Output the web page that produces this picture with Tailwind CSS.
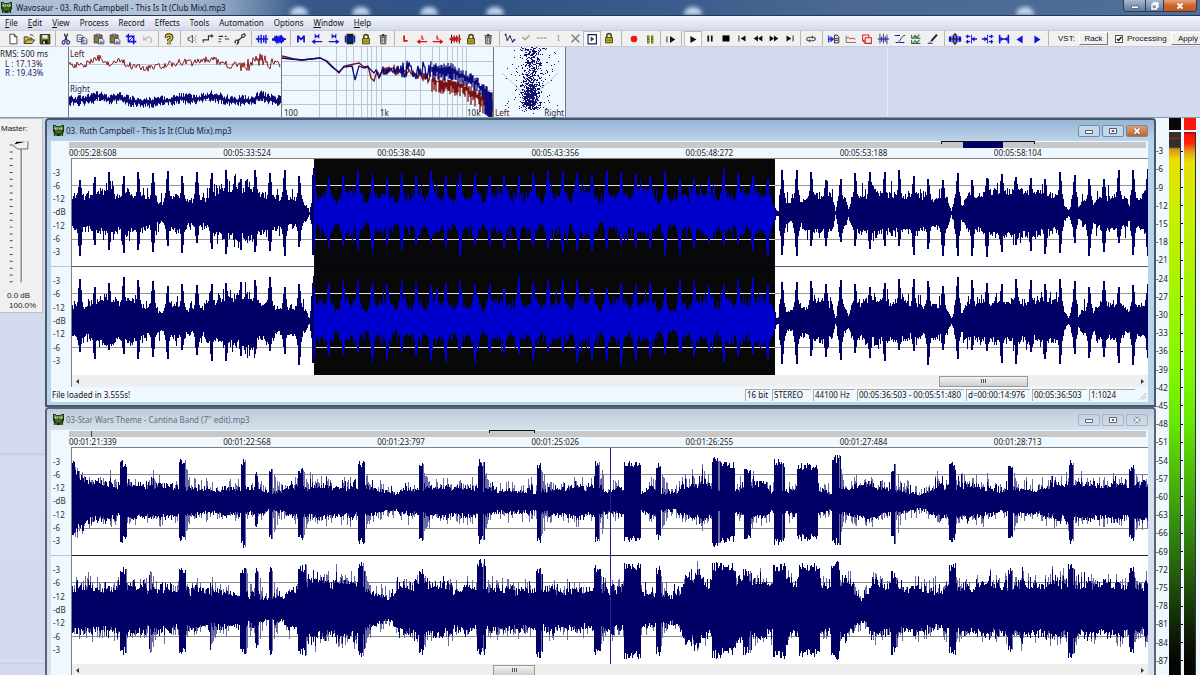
<!DOCTYPE html>
<html lang="en">
<head>
    <meta charset="UTF-8">
    <meta name="viewport" content="width=device-width, initial-scale=1.0">
    <title>Wavosaur - 03. Ruth Campbell - This Is It (Club Mix).mp3</title>
    <script src="https://cdn.jsdelivr.net/npm/@tailwindcss/browser@4"></script>
</head>
<body class="flex flex-col h-screen overflow-hidden bg-[#d3daee] text-black text-[8px] leading-[10px] font-['Noto_Sans','Liberation_Sans',sans-serif]">

    <!-- Icon set -->
    <svg class="hidden">
        <symbol id="dino" viewBox="0 0 12 12"><path fill="#1a2e10" d="M0 0h3v1h6V0h3v8h-1v4H1V8H0z"/><path fill="#5c8f34" d="M1 1h2v1h6V1h2v4H1z"/><path fill="#f0f6d0" d="M2 3h3v2H2zM7 3h3v2H7z"/><path fill="#111" d="M3 3h1v1H3zM8 3h1v1H8z"/><path fill="#5c8f34" d="M2 6h8v1H2zM3 8h6v1H3zM2 10h2v2H2zM8 10h2v2H8z"/></symbol>
        <symbol id="new" viewBox="0 0 16 16"><path fill="#fff" stroke="#333" d="M4.500 2.500h5l3 3v8h-8zM9.500 2.500v3h3"/></symbol>
        <symbol id="open" viewBox="0 0 16 16"><path fill="#c9c23a" stroke="#333" d="M2.500 13V5.500h4l1 1.500h4v2M2.500 13.200l3-4.200h9l-3 4.200z"/><path fill="none" stroke="#333" d="M9 3.500q3-1.500 4 1.500"/></symbol>
        <symbol id="save" viewBox="0 0 16 16"><path fill="#6b6b1e" stroke="#111" d="M2.500 3h11v10.500h-11z"/><path fill="#e8e8e8" d="M5 3.500h6v4H5z"/><path fill="#111" d="M5 9.500h6v4H5z"/><path fill="#ddd" d="M6 10.500h2v3H6z"/></symbol>
        <symbol id="cut" viewBox="0 0 16 16"><path fill="none" stroke="#222" stroke-width="1.400" d="M6 2l3.500 8M10 2L6.500 10"/><path fill="none" stroke="#26269a" stroke-width="1.300" d="M3.800 11.500a1.600 1.600 0 1 1 3 .8 1.600 1.600 0 1 1-3-.8M9 11.500a1.600 1.600 0 1 1 3 .8 1.600 1.600 0 1 1-3-.8"/></symbol>
        <symbol id="copy" viewBox="0 0 16 16"><path fill="#fff" stroke="#33337a" d="M2.500 3.500h5l1.500 1.500v6h-6.500zM7.500 6.500h4l2 2v5h-6z"/><path stroke="#667" d="M4 6.500h3M4 8.500h3M9 9.500h3M9 11.500h3"/></symbol>
        <symbol id="paste" viewBox="0 0 16 16"><path fill="#8a7a3a" stroke="#333" d="M2.500 3.500h9v9h-9z"/><path fill="#ccc" stroke="#333" stroke-width=".8" d="M5 2.500h4v2H5z"/><path fill="#fff" stroke="#33337a" d="M7.500 7.500h4l2 2v4h-6z"/><path stroke="#557" d="M9 10.500h3M9 12h3"/></symbol>
        <symbol id="crop" viewBox="0 0 16 16"><path fill="none" stroke="#1414e0" stroke-width="1.800" d="M5 2v9h9M2 5h9v9"/><path stroke="#1414e0" d="M5 11l7-7"/></symbol>
        <symbol id="undo" viewBox="0 0 16 16"><path fill="none" stroke="#bbb" stroke-width="1.300" d="M3 5v4h4M3.500 8.500Q9 3 12 8q1 3-2 4"/></symbol>
        <symbol id="help" viewBox="0 0 16 16"><path fill="none" stroke="#222" stroke-width="4" d="M5 6.500q0-3 3-3t3 2.500-3 3.500v1M8 12v2"/><path fill="none" stroke="#d8d020" stroke-width="2" d="M5 6q0-2.500 3-2.500t3 2.500-3 3.500v1M8 12v2"/></symbol>
        <symbol id="speaker" viewBox="0 0 16 16"><path fill="none" stroke="#444" d="M3.500 6.500h2l3-3v9l-3-3h-2zM10.500 6v1M10.500 9v1M12.500 4v1M12.500 11v1M12.500 7.500v1"/></symbol>
        <symbol id="step" viewBox="0 0 16 16"><path fill="none" stroke="#333" stroke-width="1.300" d="M2.500 12v-3h6V4.500h5M11.500 3l2 1.500-2 1.500"/></symbol>
        <symbol id="slots" viewBox="0 0 16 16"><path stroke="#333" stroke-width="1.200" d="M2 5h5M2 8h3M9 8h5M2 11h2M9 5h2"/></symbol>
        <symbol id="wrench" viewBox="0 0 16 16"><path fill="none" stroke="#333" stroke-width="1.300" d="M3 13l-1-2 2-2 2 1 4-4V3.500L13 2l1 2-2 2-2 .5M6 10l.5 2L5 13.500z"/></symbol>
        <symbol id="wave1" viewBox="0 0 16 16"><path stroke="#1212dd" stroke-width="1.600" d="M1 8h14M4 4v8M7 3v10M10 4v8M12.500 3v10"/></symbol>
        <symbol id="wave2" viewBox="0 0 16 16"><path fill="#1212dd" d="M0 7h2l1-3 1 1 1-2 1 2 1-1 1 2 1-3 1 1 1-1 1 2 2 2h2v2h-2l-1 3-1-1-1 3-1-2-1 1-1-2-1 3-1-2-1 2-1-3-2-1H0z"/></symbol>
        <symbol id="mark" viewBox="0 0 16 16"><path fill="#1414d0" d="M3.500 4h2L8 7l2.500-3h2v8h-2V7.500L8 10 5.500 7.500V12h-2z"/></symbol>
        <symbol id="mprev" viewBox="0 0 16 16"><path fill="none" stroke="#1414d0" stroke-width="1.400" d="M14 11H3M6 9l-3 2 3 2M6 7V3.500l2 2 2-2V7"/></symbol>
        <symbol id="mnext" viewBox="0 0 16 16"><path fill="none" stroke="#1414d0" stroke-width="1.400" d="M2 11h11M10 9l3 2-3 2M6 7V3.500l2 2 2-2V7"/></symbol>
        <symbol id="msel" viewBox="0 0 16 16"><path fill="#062a1a" d="M4 2h8v12H4z"/><path fill="#1414d0" d="M2 4h2v8H2zM12 4h2v8h-2zM6 6h4v4H6z"/></symbol>
        <symbol id="lock" viewBox="0 0 16 16"><path fill="none" stroke="#4a4a10" stroke-width="1.800" d="M5.500 8V5q0-2 2.500-2t2.500 2v3"/><path fill="#b8b020" stroke="#3d3d08" d="M4 7.500h8v6H4z"/><path stroke="#6a6a10" d="M5 10.500h6"/></symbol>
        <symbol id="trash" viewBox="0 0 16 16"><path fill="#ddd" stroke="#333" d="M5 6h6.500l-.5 7.500H5.500z"/><path stroke="#333" stroke-width="1.400" d="M4 4.500h8.500M7 3h2.500"/><path stroke="#333" d="M7 7v5M9.500 7v5"/></symbol>
        <symbol id="loopl" viewBox="0 0 16 16"><path fill="#d41414" d="M6 4h2v5h3v2H6z"/></symbol>
        <symbol id="lprev" viewBox="0 0 16 16"><path fill="none" stroke="#d41414" stroke-width="1.400" d="M14 11H3M6 9l-3 2 3 2M8 4v4h2.500"/></symbol>
        <symbol id="lnext" viewBox="0 0 16 16"><path fill="none" stroke="#d41414" stroke-width="1.400" d="M2 11h11M10 9l3 2-3 2M7 4v4h2.500"/></symbol>
        <symbol id="lsel" viewBox="0 0 16 16"><path stroke="#400" stroke-width="1.200" d="M4 3v10M7 4v8M10 4v8M13 3v10"/><path fill="#d41414" d="M1 8l4-3v6zM15.500 8l-4-3v6zM5 6h7v4H5z"/></symbol>
        <symbol id="curve" viewBox="0 0 16 16"><path fill="none" stroke="#223" d="M3 4l2 6 3-4 3 6 2-1"/><path fill="#1b1b90" d="M2 3h2v2H2zM4 9h2v2H4zM7 5h2v2H7zM10 11h2v2h-2zM12 9h2v2h-2z"/></symbol>
        <symbol id="check" viewBox="0 0 16 16"><path fill="none" stroke="#a5a5a5" stroke-width="1.800" d="M4 7l3 3 5-5"/></symbol>
        <symbol id="dots" viewBox="0 0 16 16"><path stroke="#a5a5a5" stroke-width="1.500" stroke-dasharray="3 1" d="M2 8h12"/></symbol>
        <symbol id="vert" viewBox="0 0 16 16"><path stroke="#a5a5a5" d="M8.500 5v6M7 5.500h3M7 10.500h3"/></symbol>
        <symbol id="cross" viewBox="0 0 16 16"><path stroke="#888" stroke-width="1.800" d="M4 4l9 9M13 4l-9 9"/></symbol>
        <symbol id="boxplay" viewBox="0 0 16 16"><path fill="#fff" stroke="#1b1b60" stroke-width="1.300" d="M3.500 3h9.500v10.500H3.500z"/><path fill="#1d4a3a" d="M6.500 5l4 3-4 3z"/></symbol>
        <symbol id="rec" viewBox="0 0 16 16"><circle cx="8" cy="8" r="3.800" fill="#f41414"/></symbol>
        <symbol id="bars" viewBox="0 0 16 16"><path stroke="#4a5a10" stroke-width="2.600" d="M6 4v9M10.500 4v9"/><path stroke="#c6c020" stroke-width="1.400" stroke-dasharray="1.500 1" d="M6 4v9M10.500 4v9"/></symbol>
        <symbol id="playfrom" viewBox="0 0 16 16"><path stroke="#111" d="M4.500 5v7"/><path fill="#111" d="M8 4.500l6 4-6 4z"/></symbol>
        <symbol id="play" viewBox="0 0 16 16"><path fill="#111" d="M5 4.500L12 8.500 5 12.500z"/></symbol>
        <symbol id="pause" viewBox="0 0 16 16"><path fill="#111" d="M5 5h2v7H5zM9 5h2v7H9z"/></symbol>
        <symbol id="stop" viewBox="0 0 16 16"><path fill="#000" d="M4 5h8v7H4z"/></symbol>
        <symbol id="first" viewBox="0 0 16 16"><path fill="#111" d="M4 5h1v7H4zM12 5v7L6.500 8.500z"/></symbol>
        <symbol id="rew" viewBox="0 0 16 16"><path fill="#111" d="M8 5v7L3 8.500zM13 5v7L8 8.500z"/></symbol>
        <symbol id="ff" viewBox="0 0 16 16"><path fill="#111" d="M3 5v7l5-3.500zM8 5v7l5-3.500z"/></symbol>
        <symbol id="last" viewBox="0 0 16 16"><path fill="#111" d="M4 5v7l5.500-3.500zM11 5h1v7h-1z"/></symbol>
        <symbol id="cycle" viewBox="0 0 16 16"><path fill="none" stroke="#444" stroke-width="1.200" d="M5 10q-2-.5-2-2t3-2h4M11 6q2 .5 2 2t-3 2H6"/><path fill="#444" d="M9 4l2.500 2L9 8zM7 8l-2.500 2L7 12z"/></symbol>
        <symbol id="wdoc" viewBox="0 0 16 16"><path stroke="#1212dd" stroke-width="1.300" d="M1 8h6M2 4v8M4.500 5v6"/><path fill="#1212dd" d="M5 5l3 3-3 3z"/><path fill="#ddd" stroke="#222" d="M8.500 3.500h3l2 2v7h-5z"/><path stroke="#333" d="M9 7.500h4M9 9.500h4"/></symbol>
        <symbol id="graph" viewBox="0 0 16 16"><path fill="none" stroke="#d02020" d="M3 7l2-1 2 2 3-1 3 1"/><path fill="none" stroke="#666" d="M2.500 4v8h11"/></symbol>
        <symbol id="cube" viewBox="0 0 16 16"><path fill="none" stroke="#e02020" stroke-width="1.200" d="M6 9.500H3v-6h7v3M6 6.500h7v6.500H6zM3 9.500l3 3.500"/></symbol>
        <symbol id="spikes" viewBox="0 0 16 16"><path stroke="#333" d="M4.500 2v11M8.500 2v11M12.500 3v11"/><path stroke="#1212dd" stroke-width="1.200" d="M2 8h13M6.500 5v6M10.500 5v6"/></symbol>
        <symbol id="ramp" viewBox="0 0 16 16"><path fill="none" stroke="#1212dd" stroke-width="1.300" d="M2 4h6M7 12h6M3 12h3"/><path fill="none" stroke="#333" d="M6 12l6-8h2"/></symbol>
        <symbol id="text" viewBox="0 0 16 16"><path fill="none" stroke="#2f6a3a" stroke-width="1.200" d="M3 3v4h10M5 6l2-2 2 2 3-3M3 9v4h10M5 12l2-2 2 2 3-3"/></symbol>
        <symbol id="pencil" viewBox="0 0 16 16"><path fill="none" stroke="#222" stroke-width="2.200" d="M12.500 3L6 10.500"/><path fill="none" stroke="#33b" d="M3 13l3-2.500M2 13h6"/></symbol>
        <symbol id="zfit" viewBox="0 0 16 16"><path fill="#1212dd" d="M1 5h2l1-1v8l-1-1H1zM5 4h2v8H5zM9 4h2v8H9zM15 5h-2l-1-1v8l1-1h2z"/><path fill="none" stroke="#111" stroke-width="1.200" d="M8 2v12M6 4l2-2 2 2M6 12l2 2 2-2M1 8h14"/></symbol>
        <symbol id="zin" viewBox="0 0 16 16"><path stroke="#1212dd" stroke-width="1.500" d="M2 5h5M2 11h5M4 3v4M4 9v4M9 8h6"/><path fill="#1212dd" d="M8 3h1v10H8zM12 5l-3 3 3 3z"/></symbol>
        <symbol id="zout" viewBox="0 0 16 16"><path stroke="#1212dd" stroke-width="1.500" d="M9 5h5M9 11h5M12 3v4M12 9v4M1 8h6"/><path fill="#1212dd" d="M7 3h1v10H7zM4 5l3 3-3 3z"/></symbol>
        <symbol id="zsel" viewBox="0 0 16 16"><path stroke="#1212dd" stroke-width="1.800" d="M3 3v10M13 3v10M3 8h10"/><path fill="#1212dd" d="M4 5l3 3-3 3zM12 5L9 8l3 3z"/></symbol>
        <symbol id="left" viewBox="0 0 16 16"><path fill="#1212dd" d="M11 4v9L4 8.500z"/></symbol>
        <symbol id="right" viewBox="0 0 16 16"><path fill="#1212dd" d="M5 4v9l7-4.500z"/></symbol>
    </svg>

    <!-- Title bar -->
    <header class="relative flex h-4 shrink-0 items-center justify-between overflow-hidden border-b border-[#26384f] bg-[linear-gradient(90deg,#a9bdd4_0%,#b4c5da_13%,#8aa3c2_19%,#38588a_25%,#2f5183_38%,#3a5c8c_55%,#4a6893_70%,#4f6e9b_100%)]">
        <div class="absolute inset-x-0 bottom-0 flex h-2 blur-[2px] [&>i]:h-2 [&>i]:w-[18px] [&>i]:rounded-t-full [&>i]:bg-[#c3d7ef]">
            <i class="ml-[290px]"></i><i class="ml-[44px]"></i><i class="ml-[50px]"></i><i class="ml-[48px]"></i><i class="ml-[180px]"></i><i class="ml-[314px]"></i>
        </div>
        <div class="relative flex items-center gap-1 pl-px">
            <svg class="size-[11px]"><use href="#dino"/></svg>
            <h1 class="font-normal text-[#101828]">Wavosaur - 03. Ruth Campbell - This Is It (Club Mix).mp3</h1>
        </div>
        <div class="relative mr-[3px] flex h-3 self-start overflow-hidden rounded-b border border-t-0 border-[#2b3c55] [&>button]:flex [&>button]:items-center [&>button]:justify-center">
            <button aria-label="Minimize" class="w-[22px] border-r border-[#2b3c55] bg-linear-to-b from-[#a9b9cd] to-[#5f7a9d]"><svg class="h-2 w-3" viewBox="0 0 12 8"><path fill="#fff" stroke="#334" stroke-width=".6" d="M2.500 4h7v2.500h-7z"/></svg></button>
            <button aria-label="Restore" class="w-[18px] border-r border-[#2b3c55] bg-linear-to-b from-[#a9b9cd] to-[#5f7a9d]"><svg class="size-2" viewBox="0 0 8 8"><path fill="none" stroke="#fff" stroke-width="1.300" d="M2.500 2.500V1H7v4H5.500M1 2.500h4.500V7H1z"/></svg></button>
            <button aria-label="Close" class="w-[32px] bg-linear-to-b from-[#e5a27c] via-[#d2622a] to-[#c25a1e]"><svg class="size-2" viewBox="0 0 8 8"><path stroke="#fff" stroke-width="1.800" d="M1.500 1.500l5 5M6.500 1.500l-5 5"/></svg></button>
        </div>
    </header>

    <!-- Menu -->
    <nav class="flex h-[14px] shrink-0 items-center gap-[10px] bg-linear-to-b from-[#f4f7fc] to-[#d3daed] pl-[5px] text-[#111]">
        <a href="#"><u>F</u>ile</a><a href="#"><u>E</u>dit</a><a href="#"><u>V</u>iew</a><a href="#">Process</a><a href="#">Record</a><a href="#">Effects</a><a href="#">Tools</a><a href="#">Automation</a><a href="#">Options</a><a href="#"><u>W</u>indow</a><a href="#"><u>H</u>elp</a>
    </nav>

    <!-- Toolbar -->
    <div class="flex h-[17px] shrink-0 items-center overflow-hidden border-y border-[#c9ccd6] bg-[#f0f0f0] pl-[5px] [&>div]:flex [&>div]:shrink-0 [&>div>button]:flex [&>div>button]:flex-1 [&>div>button]:justify-center [&>div>button>svg]:size-[14px] [&>i]:h-[15px] [&>i]:shrink-0 [&>i]:bg-[linear-gradient(#b5b5b5,#b5b5b5)] [&>i]:bg-[length:1px_100%] [&>i]:bg-center [&>i]:bg-no-repeat">
        <div class="w-[48px]"><button aria-label="New"><svg><use href="#new"/></svg></button><button aria-label="Open"><svg><use href="#open"/></svg></button><button aria-label="Save"><svg><use href="#save"/></svg></button></div>
        <i class="w-[5px]"></i>
        <div class="w-[98px]"><button aria-label="Cut"><svg><use href="#cut"/></svg></button><button aria-label="Copy"><svg><use href="#copy"/></svg></button><button aria-label="Paste"><svg><use href="#paste"/></svg></button><button aria-label="Paste mix"><svg><use href="#paste"/></svg></button><button aria-label="Crop"><svg><use href="#crop"/></svg></button><button aria-label="Undo"><svg><use href="#undo"/></svg></button></div>
        <i class="w-[5px]"></i>
        <div class="w-4"><button aria-label="About"><svg><use href="#help"/></svg></button></div>
        <i class="w-[7px]"></i>
        <div class="w-[64px]"><button aria-label="Volume"><svg><use href="#speaker"/></svg></button><button aria-label="Fade"><svg><use href="#step"/></svg></button><button aria-label="Slots"><svg><use href="#slots"/></svg></button><button aria-label="Settings"><svg><use href="#wrench"/></svg></button></div>
        <i class="w-[6px]"></i>
        <div class="w-[33px]"><button aria-label="Normalize"><svg><use href="#wave1"/></svg></button><button aria-label="Amplify"><svg><use href="#wave2"/></svg></button></div>
        <i class="w-[6px]"></i>
        <div class="w-[98px]"><button aria-label="Marker"><svg><use href="#mark"/></svg></button><button aria-label="Previous marker"><svg><use href="#mprev"/></svg></button><button aria-label="Next marker"><svg><use href="#mnext"/></svg></button><button aria-label="Select markers"><svg><use href="#msel"/></svg></button><button aria-label="Lock markers"><svg><use href="#lock"/></svg></button><button aria-label="Delete markers"><svg><use href="#trash"/></svg></button></div>
        <i class="w-[6px]"></i>
        <div class="w-[99px]"><button aria-label="Loop"><svg><use href="#loopl"/></svg></button><button aria-label="Loop start"><svg><use href="#lprev"/></svg></button><button aria-label="Loop end"><svg><use href="#lnext"/></svg></button><button aria-label="Select loop"><svg><use href="#lsel"/></svg></button><button aria-label="Lock loop"><svg><use href="#lock"/></svg></button><button aria-label="Delete loop"><svg><use href="#trash"/></svg></button></div>
        <i class="w-[6px]"></i>
        <div class="w-[115px]"><button aria-label="Envelope"><svg><use href="#curve"/></svg></button><button aria-label="Apply envelope"><svg><use href="#check"/></svg></button><button aria-label="Points"><svg><use href="#dots"/></svg></button><button aria-label="Move"><svg><use href="#vert"/></svg></button><button aria-label="Clear envelope"><svg><use href="#cross"/></svg></button><button aria-label="Follow playback" class="border border-[#bbb] bg-[#f8f8f8]"><svg><use href="#boxplay"/></svg></button><button aria-label="Lock"><svg><use href="#lock"/></svg></button></div>
        <i class="w-[9px]"></i>
        <div class="w-[32px]"><button aria-label="Record"><svg><use href="#rec"/></svg></button><button aria-label="Levels"><svg><use href="#bars"/></svg></button></div>
        <i class="w-[4px]"></i>
        <div class="w-4"><button aria-label="Play from cursor"><svg><use href="#playfrom"/></svg></button></div>
        <i class="w-[6px]"></i>
        <div class="w-[114px]"><button aria-label="Play" class="border border-[#bbb] bg-[#f8f8f8]"><svg><use href="#play"/></svg></button><button aria-label="Pause"><svg><use href="#pause"/></svg></button><button aria-label="Stop"><svg><use href="#stop"/></svg></button><button aria-label="To start"><svg><use href="#first"/></svg></button><button aria-label="Rewind"><svg><use href="#rew"/></svg></button><button aria-label="Forward"><svg><use href="#ff"/></svg></button><button aria-label="To end"><svg><use href="#last"/></svg></button></div>
        <i class="w-[5px]"></i>
        <div class="w-4"><button aria-label="Cycle"><svg><use href="#cycle"/></svg></button></div>
        <i class="w-[7px]"></i>
        <div class="w-[115px]"><button aria-label="Statistics"><svg><use href="#wdoc"/></svg></button><button aria-label="Spectrum"><svg><use href="#graph"/></svg></button><button aria-label="3D spectrum"><svg><use href="#cube"/></svg></button><button aria-label="Resample"><svg><use href="#spikes"/></svg></button><button aria-label="Interpolate"><svg><use href="#ramp"/></svg></button><button aria-label="Channels"><svg><use href="#text"/></svg></button><button aria-label="Draw"><svg><use href="#pencil"/></svg></button></div>
        <i class="w-[6px]"></i>
        <div class="w-[98px]"><button aria-label="Zoom all"><svg><use href="#zfit"/></svg></button><button aria-label="Zoom in"><svg><use href="#zin"/></svg></button><button aria-label="Zoom out"><svg><use href="#zout"/></svg></button><button aria-label="Zoom selection"><svg><use href="#zsel"/></svg></button><button aria-label="Scroll left"><svg><use href="#left"/></svg></button><button aria-label="Scroll right"><svg><use href="#right"/></svg></button></div>
        <i class="w-[6px]"></i>
        <section class="flex shrink-0 items-center pl-[7px] font-['Liberation_Sans',sans-serif] text-[#111]">
            <span class="w-[21px]">VST:</span>
            <button class="h-[13px] w-[29px] border border-t-white border-l-white border-r-[#777] border-b-[#777]">Rack</button>
            <label class="relative ml-[7px] flex w-[56px] items-center gap-1">
                <input type="checkbox" checked class="size-[8px] appearance-none border border-[#555] bg-white">
                <svg class="pointer-events-none absolute left-0 size-[8px]" viewBox="0 0 8 8"><path fill="none" stroke="#111" stroke-width="1.300" d="M2 4l1.500 1.500L6.500 2"/></svg>
                Processing
            </label>
            <button class="h-[13px] w-[34px] border border-t-white border-l-white border-r-[#777] border-b-[#777]">Apply</button>
        </section>
    </div>

    <!-- Analysis strip -->
    <section class="flex h-[71px] shrink-0 border-b border-[#8a97a8]">
        <div class="w-[68px] bg-[#f0f8ff] pt-[2px] text-[#222]">
            <p>RMS: 500 ms</p>
            <p class="pl-[5px] leading-[9px] text-[#4a1a1a]">L : 17.13%</p>
            <p class="pl-[5px] leading-[9px] text-[#1a1a70]">R : 19.43%</p>
        </div>
        <div class="relative w-[214px] border-x border-[#777] bg-[#f0f8ff]">
            <svg id="levels" class="h-full w-full" viewBox="0 0 212 70" preserveAspectRatio="none"></svg>
            <span class="absolute top-[2px] left-px text-[#5a1414]">Left</span>
            <span class="absolute top-[37px] left-px text-[#1a1a50]">Right</span>
        </div>
        <div class="relative w-[212px] border-r border-[#777] bg-[#f0f8ff]">
            <svg id="spectrum" class="h-full w-full" viewBox="0 0 211 70" preserveAspectRatio="none"></svg>
            <div class="absolute inset-x-0 bottom-0 flex leading-[8px] text-[#222]"><span class="w-[98px] pl-[2px]">100</span><span class="w-[87px]">1k</span><span>10k</span></div>
        </div>
        <div class="relative w-[72px] border-r border-[#777] bg-[#f0f8ff]">
            <svg id="scope" class="h-full w-full" viewBox="0 0 71 70"></svg>
            <div class="absolute inset-x-px bottom-0 flex justify-between leading-[8px]"><span class="text-[#5a1414]">Left</span><span class="text-[#1a1a50]">Right</span></div>
        </div>
        <div class="w-[322px] border-r border-[#e8ecf8]"></div>
    </section>

    <main class="flex min-h-0 flex-1">
        <!-- Master volume -->
        <aside class="flex w-[45px] shrink-0 flex-col bg-[linear-gradient(#d3daee_0,#d3daee_335px,#c3cbe0_336px,#d6dcf0_338px,#d3daee_540px,#dde3f4_544px,#c3cbe0_545px,#d3daee_547px)]">
            <div class="h-[195px] w-[43px] border-t border-r border-b border-[#c0c0c0] bg-[#f0f0f0] font-['Liberation_Sans',sans-serif] text-[#222]">
                <label for="master" class="block pt-[5px] pl-px">Master:</label>
                <div class="relative h-[154px]">
                    <svg class="absolute inset-0 h-full w-full" viewBox="0 0 43 154">
                        <path stroke="#444" stroke-dasharray="1 6" d="M11.500 16v134" stroke-width="3"/>
                        <path stroke="#8a8a8a" stroke-width="1.500" d="M21.700 13v137"/>
                        <path stroke="#444" d="M10 9.500h3"/>
                        <path fill="#f0f0f0" stroke="#666" d="M13 9.500l5 4h10.500v-8"/><path stroke="#fff" d="M14 9l3-3.500h11"/>
                    </svg>
                    <input id="master" type="range" value="100" class="absolute inset-0 h-full w-full opacity-0">
                </div>
                <p class="pt-[3px] pl-[7px]">0.0 dB</p>
                <p class="pl-[9px]">100.0%</p>
            </div>
        </aside>

        <!-- Document windows -->
        <div class="min-w-0 flex-1 overflow-hidden">
            <article class="rounded-t border-2 border-[#45586c] bg-[#b9d3e8] pr-[6px] pb-[3px] pl-1">
                <div class="-mr-[6px] -ml-1 flex h-[21px] items-center justify-between rounded-t bg-linear-to-b from-[#98b4d4] to-[#bdd4ea] px-[6px]">
                    <div class="flex items-center gap-[2px]"><svg class="size-[11px]"><use href="#dino"/></svg><h2 class="text-[#16233a]">03. Ruth Campbell - This Is It (Club Mix).mp3</h2></div>
                    <div class="flex gap-[2px] [&>button]:flex [&>button]:h-3 [&>button]:w-[22px] [&>button]:items-center [&>button]:justify-center [&>button]:rounded-[2px] [&>button]:border [&>button]:border-[#6f8aa8] [&_svg]:h-2 [&_svg]:w-3">
                        <button aria-label="Minimize" class="bg-[#c3d8ec]"><svg viewBox="0 0 12 8"><path fill="#fff" stroke="#556" d="M2.500 3.500h7v3h-7z"/></svg></button>
                        <button aria-label="Restore" class="bg-[#c3d8ec]"><svg viewBox="0 0 12 8"><path fill="#fff" stroke="#556" d="M2.500 1.500h7v5h-7zM5 3.500h2v1H5z"/></svg></button>
                        <button aria-label="Close" class="bg-linear-to-b from-[#e0a070] to-[#c4621c]"><svg viewBox="0 0 12 8"><path stroke="#555" stroke-width="3" d="M3.500 1.500l5 5M8.500 1.500l-5 5"/><path stroke="#fff" stroke-width="1.800" d="M3.500 1.500l5 5M8.500 1.500l-5 5"/></svg></button>
                    </div>
                </div>
                <div class="bg-[#f0f8ff] text-[#222]">
                    <div class="ml-[18px] h-[7px] pt-px pr-[2px]">
                        <div class="relative h-[6px] bg-[#c8c8c8]">
                            <div class="absolute top-0 left-[83%] h-full w-[40px] bg-[#000066]"></div>
                            <div class="absolute -top-px left-[81%] h-[3px] w-[94px] border-x border-t border-[#111]"></div>
                        </div>
                    </div>
                    <div class="ml-[18px] grid h-[10px] grid-cols-7 text-[#222]"><time>00:05:28:608</time><time>00:05:33:524</time><time>00:05:38:440</time><time>00:05:43:356</time><time>00:05:48:272</time><time>00:05:53:188</time><time>00:05:58:104</time></div>
                    <div class="flex">
                        <div class="mt-px grid w-5 shrink-0 grid-rows-2 divide-y divide-[#b8c6d8] text-[#333] [&>div]:flex [&>div]:flex-col [&>div]:py-[7px] [&>div]:pl-[2px] [&_span]:flex [&_span]:flex-1 [&_span]:items-center [&_span]:leading-[8px]">
                            <div><span>-3</span><span>-6</span><span>-12</span><span>-dB</span><span>-12</span><span>-6</span><span>-3</span></div>
                            <div><span>-3</span><span>-6</span><span>-12</span><span>-dB</span><span>-12</span><span>-6</span><span>-3</span></div>
                        </div>
                        <div class="min-w-0 flex-1 border-t border-l border-[#808080] bg-white"><svg id="wave-a" class="block h-[216px] w-full" viewBox="1 0 1076 216" preserveAspectRatio="none" shape-rendering="crispEdges"></svg></div>
                    </div>
                    <div class="ml-5 flex h-3 items-center border-l border-[#808080] bg-[#efefef] px-[3px]">
                        <button aria-label="Scroll left"><svg class="size-[5px]" viewBox="0 0 5 5"><path fill="#333" d="M4 0v5L1 2.500z"/></svg></button>
                        <div class="flex flex-1"><div class="w-[81%]"></div><div class="flex h-[11px] w-[89px] items-center justify-center gap-px border border-[#999] bg-linear-to-b from-[#f2f2f2] to-[#cfcfcf] [&>i]:h-1 [&>i]:w-px [&>i]:bg-[#555]"><i></i><i></i><i></i></div></div>
                        <button aria-label="Scroll right"><svg class="size-[5px]" viewBox="0 0 5 5"><path fill="#333" d="M1 0v5l3-2.500z"/></svg></button>
                    </div>
                    <footer class="flex h-[15px] items-center justify-between pl-px text-[#111]">
                        <span>File loaded in 3.555s!</span>
                        <div class="flex gap-[2px] [&>span]:h-3 [&>span]:border-t [&>span]:border-l [&>span]:border-[#aaa] [&>span]:pl-px [&>span]:whitespace-nowrap">
                            <span class="w-[25px]">16 bit</span><span class="w-[39px]">STEREO</span><span class="w-[42px]">44100 Hz</span><span class="w-[107px]">00:05:36:503 - 00:05:51:480</span><span class="w-[64px]">d=00:00:14:976</span><span class="w-[55px]">00:05:36:503</span><span class="w-[46px]">1:1024</span>
                            <svg class="w-[11px] h-3 self-end" viewBox="0 0 12 12"><path stroke="#aaa" d="M3 11l7-7M6 11l4-4M9 11l1-1"/></svg>
                        </div>
                    </footer>
                </div>
            </article>

            <article class="rounded-t border-2 border-[#566676] bg-[#d5e1ee] pr-[6px] pb-[3px] pl-1">
                <div class="-mr-[6px] -ml-1 flex h-[21px] items-center justify-between rounded-t bg-linear-to-b from-[#bfcbd9] to-[#d6e1f0] px-[6px]">
                    <div class="flex items-center gap-[2px]"><svg class="size-[11px]"><use href="#dino"/></svg><h2 class="text-[#666e7a]">03-Star Wars Theme - Cantina Band (7'' edit).mp3</h2></div>
                    <div class="flex gap-[2px] [&>button]:flex [&>button]:h-3 [&>button]:w-[22px] [&>button]:items-center [&>button]:justify-center [&>button]:rounded-[2px] [&>button]:border [&>button]:border-[#a3b2c6] [&_svg]:h-2 [&_svg]:w-3">
                        <button aria-label="Minimize"><svg viewBox="0 0 12 8"><path fill="#fff" stroke="#667" d="M2.500 3.500h7v3h-7z"/></svg></button>
                        <button aria-label="Restore"><svg viewBox="0 0 12 8"><path fill="#fff" stroke="#667" d="M2.500 1.500h7v5h-7zM5 3.500h2v1H5z"/></svg></button>
                        <button aria-label="Close"><svg viewBox="0 0 12 8"><path stroke="#667" stroke-width="3" d="M3.500 1.500l5 5M8.500 1.500l-5 5"/><path stroke="#fff" stroke-width="1.500" d="M3.500 1.500l5 5M8.500 1.500l-5 5"/></svg></button>
                    </div>
                </div>
                <div class="bg-[#f0f8ff] text-[#222]">
                    <div class="ml-[18px] h-[7px] pt-px pr-[2px]">
                        <div class="relative h-[6px] bg-[#c8c8c8]">
                            <div class="absolute top-0 left-[2%] h-full w-px bg-[#444]"></div>
                            <div class="absolute -top-px left-[39%] h-[3px] w-[46px] border-x border-t border-[#111]"></div>
                        </div>
                    </div>
                    <div class="ml-[18px] grid h-[10px] grid-cols-7 text-[#222]"><time>00:01:21:339</time><time>00:01:22:568</time><time>00:01:23:797</time><time>00:01:25:026</time><time>00:01:26:255</time><time>00:01:27:484</time><time>00:01:28:713</time></div>
                    <div class="flex">
                        <div class="mt-px grid w-5 shrink-0 grid-rows-2 divide-y divide-[#b8c6d8] text-[#333] [&>div]:flex [&>div]:flex-col [&>div]:py-[7px] [&>div]:pl-[2px] [&_span]:flex [&_span]:flex-1 [&_span]:items-center [&_span]:leading-[8px]">
                            <div><span>-3</span><span>-6</span><span>-12</span><span>-dB</span><span>-12</span><span>-6</span><span>-3</span></div>
                            <div><span>-3</span><span>-6</span><span>-12</span><span>-dB</span><span>-12</span><span>-6</span><span>-3</span></div>
                        </div>
                        <div class="min-w-0 flex-1 border-t border-l border-[#808080] bg-white"><svg id="wave-b" class="block h-[216px] w-full" viewBox="1 0 1076 216" preserveAspectRatio="none" shape-rendering="crispEdges"></svg></div>
                    </div>
                    <div class="ml-5 flex h-3 items-center border-l border-[#808080] bg-[#efefef] px-[3px]">
                        <button aria-label="Scroll left"><svg class="size-[5px]" viewBox="0 0 5 5"><path fill="#333" d="M4 0v5L1 2.500z"/></svg></button>
                        <div class="flex flex-1"><div class="w-[39%]"></div><div class="flex h-[11px] w-[42px] items-center justify-center gap-px border border-[#999] bg-linear-to-b from-[#f2f2f2] to-[#cfcfcf] [&>i]:h-1 [&>i]:w-px [&>i]:bg-[#555]"><i></i><i></i><i></i></div></div>
                        <button aria-label="Scroll right"><svg class="size-[5px]" viewBox="0 0 5 5"><path fill="#333" d="M1 0v5l3-2.500z"/></svg></button>
                    </div>
                </div>
            </article>
        </div>

        <!-- Output meter -->
        <aside class="flex w-[44px] shrink-0 bg-[#f0f8ff]">
            <div id="scale" class="flex w-[13px] flex-col pt-[24px] pb-[5px] text-[#222] [&>span]:flex [&>span]:flex-1 [&>span]:items-center"></div>
            <div class="flex w-[12px] flex-col gap-[2px]">
                <div class="h-3 bg-[#080808]"></div>
                <div class="flex-1 border-r border-[#333] bg-[linear-gradient(#303030_0,#303030_5px,#a02010_6px,#303030_8px,#303030_15px,#d89020_17px,#e8e000_28px,#c8f000_80px,#80f800_240px,#68e800_290px,#3a9a10_380px,#245f0c_440px,#0e1e08_500px,#050505_530px)]"></div>
            </div>
            <div id="ticks" class="flex w-[3px] flex-col pt-[24px] pb-[5px] [&>i]:flex [&>i]:flex-1 [&>i]:items-center"></div>
            <div class="flex w-[12px] flex-col gap-[2px]">
                <div class="h-3 bg-[#ff1408]"></div>
                <div class="flex-1 border-r border-[#333] bg-[linear-gradient(#901010_0,#ff1408_3px,#ff2008_11px,#e0a020_20px,#e8e000_30px,#c8f000_80px,#80f800_240px,#68e800_290px,#3a9a10_380px,#245f0c_440px,#0e1e08_500px,#050505_530px)]"></div>
            </div>
        </aside>
    </main>

    <script>
        let seed = 7;
        function rnd() {
            seed = (seed * 16807) % 2147483647;
            return seed / 2147483647;
        }

        // linear interpolation in a flat list x0, v0, x1, v1, ...
        function at(keys, x) {
            for (let i = 2; i < keys.length; i += 2) {
                if (x <= keys[i]) {
                    const t = (x - keys[i - 2]) / (keys[i] - keys[i - 2]);
                    return keys[i - 1] + (keys[i + 1] - keys[i - 1]) * Math.max(0, t);
                }
            }
            return keys[keys.length - 1];
        }

        const grid = color => `<path stroke="${color}" d="M0 26.5H1077M0 80.5H1077M0 134.5H1077M0 188.5H1077"/>`;

        // Club mix: steady beat, one hit every 14.63 units
        const bodyA = [0,12, 8,21, 13,13, 20,20, 45,20, 60,20, 75,15, 85,12, 92,8, 97,13, 105,19, 118,12, 130,14, 137,18, 150,21, 160,22, 175,25, 190,21, 200,15, 215,13, 230,15, 236,7, 238,2, 240,14, 243,8,
            247,16, 260,20, 264,14, 270,18, 285,18, 298,13, 305,18, 330,18, 343,13, 347,18, 365,19, 373,12, 378,19, 388,21, 398,13, 404,20, 415,14, 430,19, 445,18, 456,13, 461,18, 485,19, 490,10, 495,20, 515,20, 530,13, 545,20, 560,20, 575,19, 605,10, 613,20, 640,19, 660,17, 665,9, 670,20, 695,20, 703,11,
            705,3, 709,3, 712,10, 730,13, 745,18, 761,17, 764,3, 767,12, 774,13, 777,5, 781,16, 800,21, 820,18, 845,16, 875,14, 880,3, 884,14, 891,8, 896,18, 925,19, 955,20, 985,18, 993,8, 997,3, 1001,12, 1007,5, 1013,15, 1020,7, 1027,16, 1050,18, 1058,8, 1065,14, 1077,20];

        function drawClub(svg) {
            let dark = "", lit = "";
            for (const mid of [54, 162]) {
                const hits = Array.from({ length: 75 }, () => [33 + rnd() * 11, 29 + rnd() * 15]);
                let lump = 1;
                for (let x = 0; x < 1077; x++) {
                    if (rnd() < 0.25) lump = 0.85 + rnd() * 0.3;
                    let body = at(bodyA, x) * lump;
                    const beat = Math.abs((x - 251) % 29.26 - 14.63);
                    if (x > 243 && x < 704 && beat < 4) body *= 0.6 + beat * 0.1;
                    let up = body * (0.8 + rnd() * 0.4), down = body * (0.8 + rnd() * 0.4);
                    if (rnd() < 0.12 && body > 10) up += 3 + rnd() * 8;
                    if (rnd() < 0.1 && body > 10) down += 3 + rnd() * 7;
                    const k = Math.round((x - 8.4) / 14.63);
                    const d = Math.abs(x - 8.4 - k * 14.63);
                    if (k >= 0 && (x < 236 || x > 240) && d < 3.5) {
                        const fall = d < 1 ? 1 : 1 - d * 0.16;
                        const floor = d < 1.6 ? 1 : 0.75;
                        up = Math.max(up, hits[k][0] * fall * floor);
                        down = Math.max(down, hits[k][1] * fall * floor);
                    }
                    if (x == 241 || x == 242) { up = 38 + (x - 241) * 7; down = 42; }
                    const seg = `M${x + 0.5} ${(mid - up).toFixed(1)}V${(mid + down).toFixed(1)}`;
                    if (x >= 243 && x < 704) lit += seg; else dark += seg;
                }
            }
            svg.innerHTML = grid("#999") + `<path stroke="#55557a" d="M0 107.5H1077"/>
                <svg x="243" width="461" height="216" viewBox="243 0 461 216"><rect x="243" width="461" height="216" fill="#080808"/>${grid("#e0e0e0")}<path stroke="#000030" d="M0 107.5H1077"/></svg>
                <path stroke="#000066" d="${dark}"/><path stroke="#0000cc" d="${lit}"/>`;
        }

        // Cantina band: body level per channel, then [x, up, down, width] for the hits
        const bodyB = [
            [0,30, 8,24, 16,20, 40,15, 90,13, 150,12, 210,9, 230,15, 260,15, 300,11, 320,8, 360,14, 400,12, 460,9, 500,13, 550,11, 572,8, 580,13, 590,9, 604,8, 612,14, 634,17, 640,10, 675,11, 690,15, 700,10, 735,14, 760,8, 775,13, 800,14, 850,7, 870,14, 900,14, 925,10, 970,11, 985,16, 1030,15, 1077,16],
            [0,20, 60,20, 150,16, 210,11, 222,20, 232,27, 280,24, 300,16, 318,8, 332,24, 380,20, 460,17, 500,18, 560,17, 590,14, 606,11, 613,30, 635,28, 642,18, 675,26, 700,24, 735,27, 760,22, 775,24, 785,14, 790,8, 800,22, 850,18, 870,19, 950,24, 1000,23, 1077,22]];
        const hitsB = [
            [[2,40,34,2],[52,43,42,6],[80,28,18,1],[111,46,41,7],[172,44,47,5],[185,30,25,2],[199,36,40,2],[230,36,40,7],[290,43,44,6],[350,40,40,4],[410,44,42,7],[468,40,42,5],[526,44,43,5],[561,38,37,17],[587,42,40,5],[645,48,48,9],[656,38,38,14],[676,34,38,6],[692,22,14,8],[708,44,44,11],[736,36,36,20],[765,48,44,8],[822,38,42,4],[881,40,40,6],[939,40,40,5],[1000,44,44,5],[1060,38,40,4]],
            [[52,44,46,6],[78,42,46,1],[111,46,48,7],[139,30,44,1],[172,46,48,6],[185,42,38,2],[199,44,46,2],[231,46,46,8],[290,49,48,7],[350,42,46,5],[410,52,46,8],[468,42,48,6],[526,48,48,6],[561,44,46,17],[587,44,46,4],[617,36,36,6],[645,49,50,9],[657,44,42,14],[676,42,46,8],[690,30,30,10],[708,44,46,12],[738,44,44,20],[764,49,50,8],[781,28,22,6],[822,40,46,5],[881,48,46,6],[939,44,44,5],[1000,48,50,6],[1060,44,44,4]]];

        function drawBand(svg) {
            let solid = "", soft = "";
            [54, 162].forEach((mid, ch) => {
                let lump = 1;
                for (let x = 0; x < 1077; x++) {
                    if (rnd() < 0.3) lump = 0.9 + rnd() * 0.35;
                    const body = at(bodyB[ch], x) * lump;
                    let up = body * (0.85 + rnd() * 0.4), down = body * (0.8 + rnd() * 0.4);
                    if (rnd() < 0.15) up += rnd() * 9;
                    let fu = 0, fd = 0;
                    if (rnd() < 0.35) { fu = up + rnd() * 10; fd = down + rnd() * 9; }
                    for (const [hx, hu, hd, w] of hitsB[ch]) {
                        const d = x - hx;
                        if (Math.abs(d) <= w / 2) {
                            const s = (w < 12 ? 0.8 : 0.88) + rnd() * 0.2;
                            if (w >= 12 || d <= 1 || rnd() < 0.5) { up = Math.max(up, hu * s); down = Math.max(down, hd * s); }
                            else { fu = hu * s; fd = hd * s; }
                        } else if (d > 0 && d < w / 2 + 7 && w < 9 && rnd() < 0.6) {
                            const s = (1 - d / 15) * (0.8 + rnd() * 0.3);
                            fu = Math.max(fu, hu * s); fd = Math.max(fd, hd * s);
                        }
                    }
                    const lim = v => Math.min(v, 53);
                    solid += `M${x + 0.5} ${(mid - lim(up)).toFixed(1)}V${(mid + lim(down)).toFixed(1)}`;
                    if (fu > up || fd > down) soft += `M${x + 0.5} ${(mid - lim(fu)).toFixed(1)}V${(mid + lim(fd)).toFixed(1)}`;
                }
            });
            svg.innerHTML = grid("#888") + `<path stroke="#6a6aa4" d="${soft}"/><path stroke="#000066" d="${solid}"/>
                <path stroke="#222240" d="M0 107.5H1077"/><path stroke="#2020a0" d="M539.5 0V216"/>`;
        }

        function drawLevels(svg) {
            const keys = [0,18, 18,17, 30,11, 40,17, 50,13, 62,19, 80,21, 95,19, 110,15, 125,16, 142,12, 160,18, 180,18, 192,12, 205,18, 212,18];
            let red = "", blue = "";
            for (let x = 0; x < 212; x++) {
                red += `${x ? "L" : "M"}${x} ${(at(keys, x) + (rnd() - 0.5) * (x > 170 ? 12 : 7)).toFixed(1)}`;
                const y = at(keys, x) * 0.7 + 41;
                blue += `M${x + 0.5} ${(y - 1 - rnd() * 5).toFixed(1)}V${(y + 1 + rnd() * 5).toFixed(1)}`;
            }
            svg.innerHTML = `<path stroke="#b8c2c8" d="M0 17.500H212M0 35.500H212M0 53.500H212"/><path fill="none" stroke="#8b2020" d="${red}"/><path stroke="#0a0a70" d="${blue}"/>`;
        }

        function drawSpectrum(svg) {
            const v = [37, 54, 64, 71, 79, 85, 89, 94, 99, 123, 138, 150, 157, 165, 170, 175, 180, 184];
            let lines = "M0 14.500H211M0 28.500H211M0 43.500H211M0 57.500H211";
            v.forEach(x => lines += `M${x}.5 0V70`);
            let red = "M0 9L12 12 20 13 38 11 45 14 57 26 62 19 77 16 82 20 86 19 89 31 92 34 95 24 98 29", blue = "M0 11L8 12 20 13 38 11 44 14 50 20 57 25 62 20 70 19 73 33 77 19 82 21 86 20 92 26 94 23 97 31";
            for (let x = 100; x < 150; x++) {
                red += `L${x} ${(at([100,24, 125,24, 150,32], x) + (rnd() - 0.5) * 10).toFixed(1)}`;
                blue += `L${x} ${(23 + (rnd() - 0.5) * (x < 120 ? 9 : 19)).toFixed(1)}`;
            }
            for (let x = 150; x < 211; x++) {
                const r = at([150,33, 160,36, 180,38, 190,46, 211,55], x);
                const b = at([150,22, 170,23, 185,31, 195,36, 203,44, 211,50], x);
                const tail = x > 202 ? 22 : 10;
                red += `M${x} ${(r - rnd() * 6).toFixed(1)}V${(r + rnd() * (x > 185 ? 16 : 12)).toFixed(1)}`;
                blue += `M${x} ${(b - rnd() * 7).toFixed(1)}V${(b + 1 + tail * (x > 202 ? 1 : rnd())).toFixed(1)}`;
            }
            svg.innerHTML = `<path stroke="#bcc6cc" d="${lines}"/><path fill="none" stroke="#7a1010" stroke-width="1.300" d="${red}"/><path fill="none" stroke="#0a0a7a" stroke-width="1.300" d="${blue}"/>`;
        }

        function drawScope(svg) {
            let dots = "";
            const g = () => rnd() + rnd() + rnd() - 1.5;
            for (let i = 0; i < 700; i++) {
                const y = rnd() * 62;
                dots += `M${Math.round(37 + g() * (rnd() < 0.25 ? 20 : 9))} ${Math.round(y)}.5h1`;
            }
            for (let i = 0; i < 400; i++) dots += `M${Math.round(36 + g() * 8)} ${Math.round(50 + g() * 11)}.5h1`;
            svg.innerHTML = `<path fill="none" stroke="#c0c4c8" d="M8 26L27 44M64 26L45 44"/><path stroke="#14146e" d="${dots}"/>`;
        }

        drawClub(document.getElementById("wave-a"));
        drawBand(document.getElementById("wave-b"));
        drawLevels(document.getElementById("levels"));
        drawSpectrum(document.getElementById("spectrum"));
        drawScope(document.getElementById("scope"));

        const scale = document.getElementById("scale");
        const ticks = document.getElementById("ticks");
        for (let db = 3; db <= 87; db += 3) {
            scale.innerHTML += `<span>-${db}</span>`;
            ticks.innerHTML += `<i><b class="h-px w-[2px] bg-black"></b></i>`;
        }
    </script>
</body>
</html>
